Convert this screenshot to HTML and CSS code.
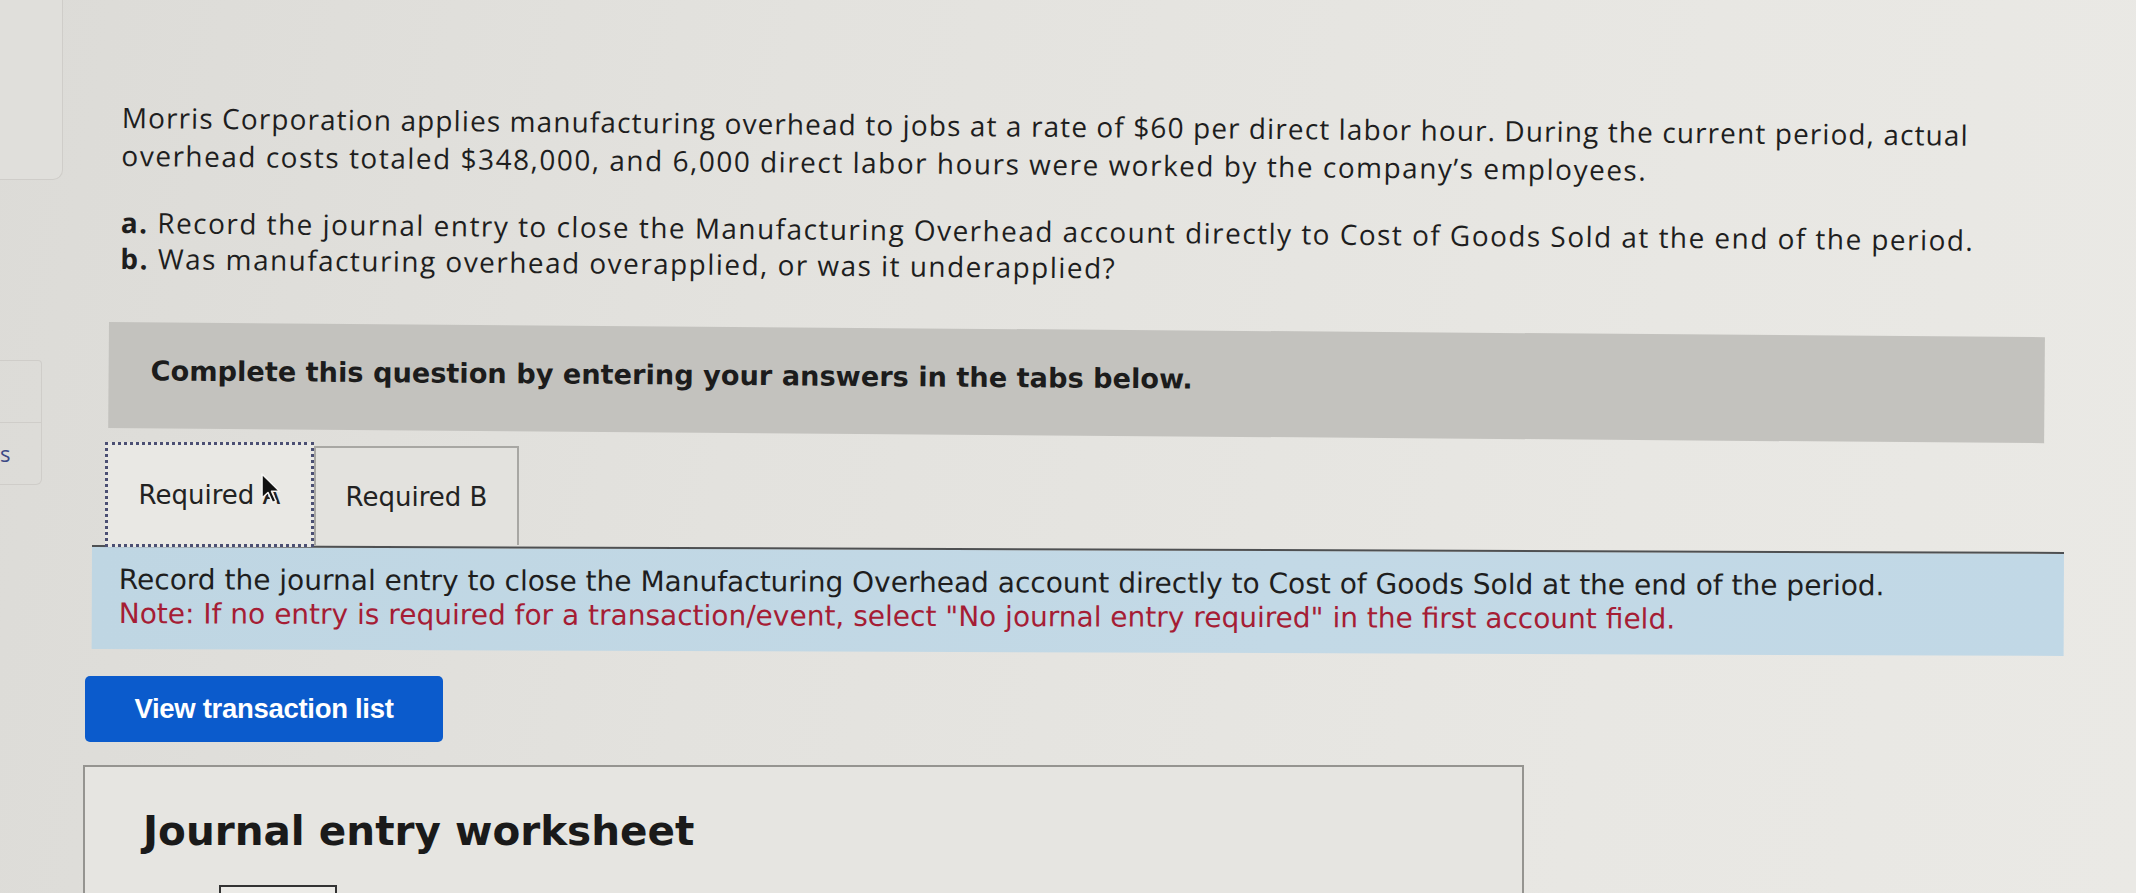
FILE: index.html
```html
<!DOCTYPE html>
<html lang="en">
<head>
<meta charset="utf-8">
<title>Morris Corporation – Journal entry</title>
<link rel="stylesheet" href="styles.css">
</head>
<body>
<div class="page">
  <aside class="side">
    <div class="side-card side-card-top"></div>
    <div class="side-stack">
      <div class="side-item"></div>
      <div class="side-item"><span class="side-s">s</span></div>
    </div>
  </aside>
  <main class="main">
    <div class="intro">
      <p class="lead">Morris Corporation applies manufacturing overhead to jobs at a rate of $60 per direct labor hour. During the current period, actual<br><span class="lead-2">overhead costs totaled $348,000, and 6,000 direct labor hours were worked by the company’s employees.</span></p>
      <ol class="parts">
        <li><b>a.</b> Record the journal entry to close the Manufacturing Overhead account directly to Cost of Goods Sold at the end of the period.</li>
        <li><b>b.</b> Was manufacturing overhead overapplied, or was it underapplied?</li>
      </ol>
    </div>
    <div class="instructions">Complete this question by entering your answers in the tabs below.</div>
    <div class="tabs">
      <div class="tab tab-active">Required A
        <svg class="cursor" width="22" height="32" viewBox="0 0 22 32"><path d="M2 1 L2 25 L8 19.5 L12.5 29.5 L16 28 L11.6 18.3 L19.5 18.3 Z" fill="#111" stroke="#f4f4f2" stroke-width="1.6" stroke-linejoin="round"/></svg>
      </div>
      <div class="tab">Required B</div>
    </div>
    <div class="panel">
      <p>Record the journal entry to close the Manufacturing Overhead account directly to Cost of Goods Sold at the end of the period.</p>
      <p class="note">Note: If no entry is required for a transaction/event, select "No journal entry required" in the first account field.</p>
    </div>
    <button class="btn" type="button">View transaction list</button>
    <section class="worksheet">
      <h2 class="ws-title">Journal entry worksheet</h2>
      <div class="ws-steps"><span class="ws-step"></span></div>
    </section>
  </main>
</div>
</body>
</html>
```
FILE: styles.css
```css
html, body {
  margin: 0;
  padding: 0;
  height: 100%;
  overflow: hidden;
}
body {
  background: linear-gradient(100deg, #dcdbd7 0%, #e3e2de 35%, #e8e7e3 75%, #eae9e5 100%);
  color: #1f1f1f;
}
.page {
  display: flex;
  align-items: flex-start;
  height: 893px;
  overflow: hidden;
}
.side {
  width: 75px;
  flex: none;
  display: flex;
  flex-direction: column;
}
.side-card {
  box-sizing: border-box;
  border: 1px solid #cfcdc9;
  border-left: none;
  border-top: none;
}
.side-card-top {
  width: 63px;
  height: 180px;
  border-radius: 0 0 10px 0;
  background: #e0dfdb;
}
.side-stack {
  margin-top: 180px;
  width: 42px;
  box-sizing: border-box;
  border: 1px solid #cfcdc9;
  border-left: none;
  border-radius: 0 4px 6px 0;
}
.side-item {
  height: 61px;
  display: flex;
  align-items: center;
}
.side-item + .side-item {
  border-top: 1px solid #cfcdc9;
}
.side-s {
  font-family: "Open Sans", sans-serif;
  font-size: 22px;
  color: #3c4a86;
  margin-top: -2px;
}
.main {
  flex: 1;
  display: flex;
  flex-direction: column;
  align-items: flex-start;
  padding-top: 98px;
}
.intro {
  margin-left: 47px;
  font-family: "Open Sans", sans-serif;
  font-size: 28px;
  letter-spacing: 1.1px;
  color: #1e1e1e;
  transform: rotate(0.55deg);
  transform-origin: 0 0;
}
.lead {
  margin: 0;
  line-height: 38px;
  white-space: nowrap;
}
.lead-2 {
  letter-spacing: 1.5px;
}
.parts {
  list-style: none;
  margin: 30px 0 0;
  padding: 0;
  line-height: 36px;
  letter-spacing: 1.45px;
  white-space: nowrap;
}
.parts b {
  font-weight: 700;
}
.instructions {
  margin: 46px 0 0 34px;
  width: 1936px;
  box-sizing: border-box;
  padding: 33px 42px 42px;
  background: #c3c2be;
  font-family: "DejaVu Sans", Verdana, sans-serif;
  font-weight: 700;
  font-size: 27.2px;
  line-height: 31px;
  color: #1c1c1c;
  white-space: nowrap;
  transform: rotate(0.45deg);
  transform-origin: 0 0;
}
.tabs {
  display: flex;
  align-items: flex-end;
  margin: 14px 0 0 30px;
  position: relative;
  z-index: 1;
}
.tab {
  box-sizing: border-box;
  height: 99px;
  width: 205px;
  display: flex;
  align-items: center;
  justify-content: center;
  font-family: "DejaVu Sans", Verdana, sans-serif;
  font-size: 26px;
  color: #222;
  background: #e3e2de;
  border: 2px solid #a8a7a3;
  border-bottom: none;
  position: relative;
}
.tab-active {
  height: 105px;
  width: 209px;
  background: #e9e8e4;
  border: 3px dotted #4b4f73;
  margin-bottom: -2px;
}
.cursor {
  position: absolute;
  left: 152px;
  top: 28px;
}
.panel {
  margin-left: 17px;
  width: 1972px;
  box-sizing: border-box;
  padding: 16px 27px 18px;
  background: linear-gradient(90deg, #bfd6e3, #c3d9e6 60%, #c1d8e6);
  border-top: 2px solid #4e5052;
  font-family: "DejaVu Sans", Verdana, sans-serif;
  font-size: 28px;
  line-height: 34px;
  color: #1e1e1e;
  transform: rotate(0.2deg);
  transform-origin: 0 0;
}
.panel p {
  margin: 0;
  white-space: nowrap;
}
.panel .note {
  color: #a51d35;
}
.btn {
  margin: 27px 0 0 10px;
  width: 358px;
  height: 66px;
  border: none;
  border-radius: 5px;
  background: #0b5bcc;
  color: #ffffff;
  font-family: "Liberation Sans", Arial, sans-serif;
  font-weight: 700;
  font-size: 27.5px;
  letter-spacing: -0.3px;
  padding: 0;
}
.worksheet {
  margin: 23px 0 0 8px;
  width: 1441px;
  height: 200px;
  box-sizing: border-box;
  border: 2px solid #959490;
  background: #e6e5e1;
  padding: 40px 0 0 58px;
}
.ws-title {
  margin: 0;
  font-family: "DejaVu Sans", Verdana, sans-serif;
  font-weight: 700;
  font-size: 40.5px;
  line-height: 48px;
  color: #1a1a1a;
}
.ws-steps {
  margin: 30px 0 0 76px;
  display: flex;
}
.ws-step {
  width: 114px;
  height: 30px;
  border: 2px solid #333;
  border-bottom: none;
  background: #ecebe7;
}
```
